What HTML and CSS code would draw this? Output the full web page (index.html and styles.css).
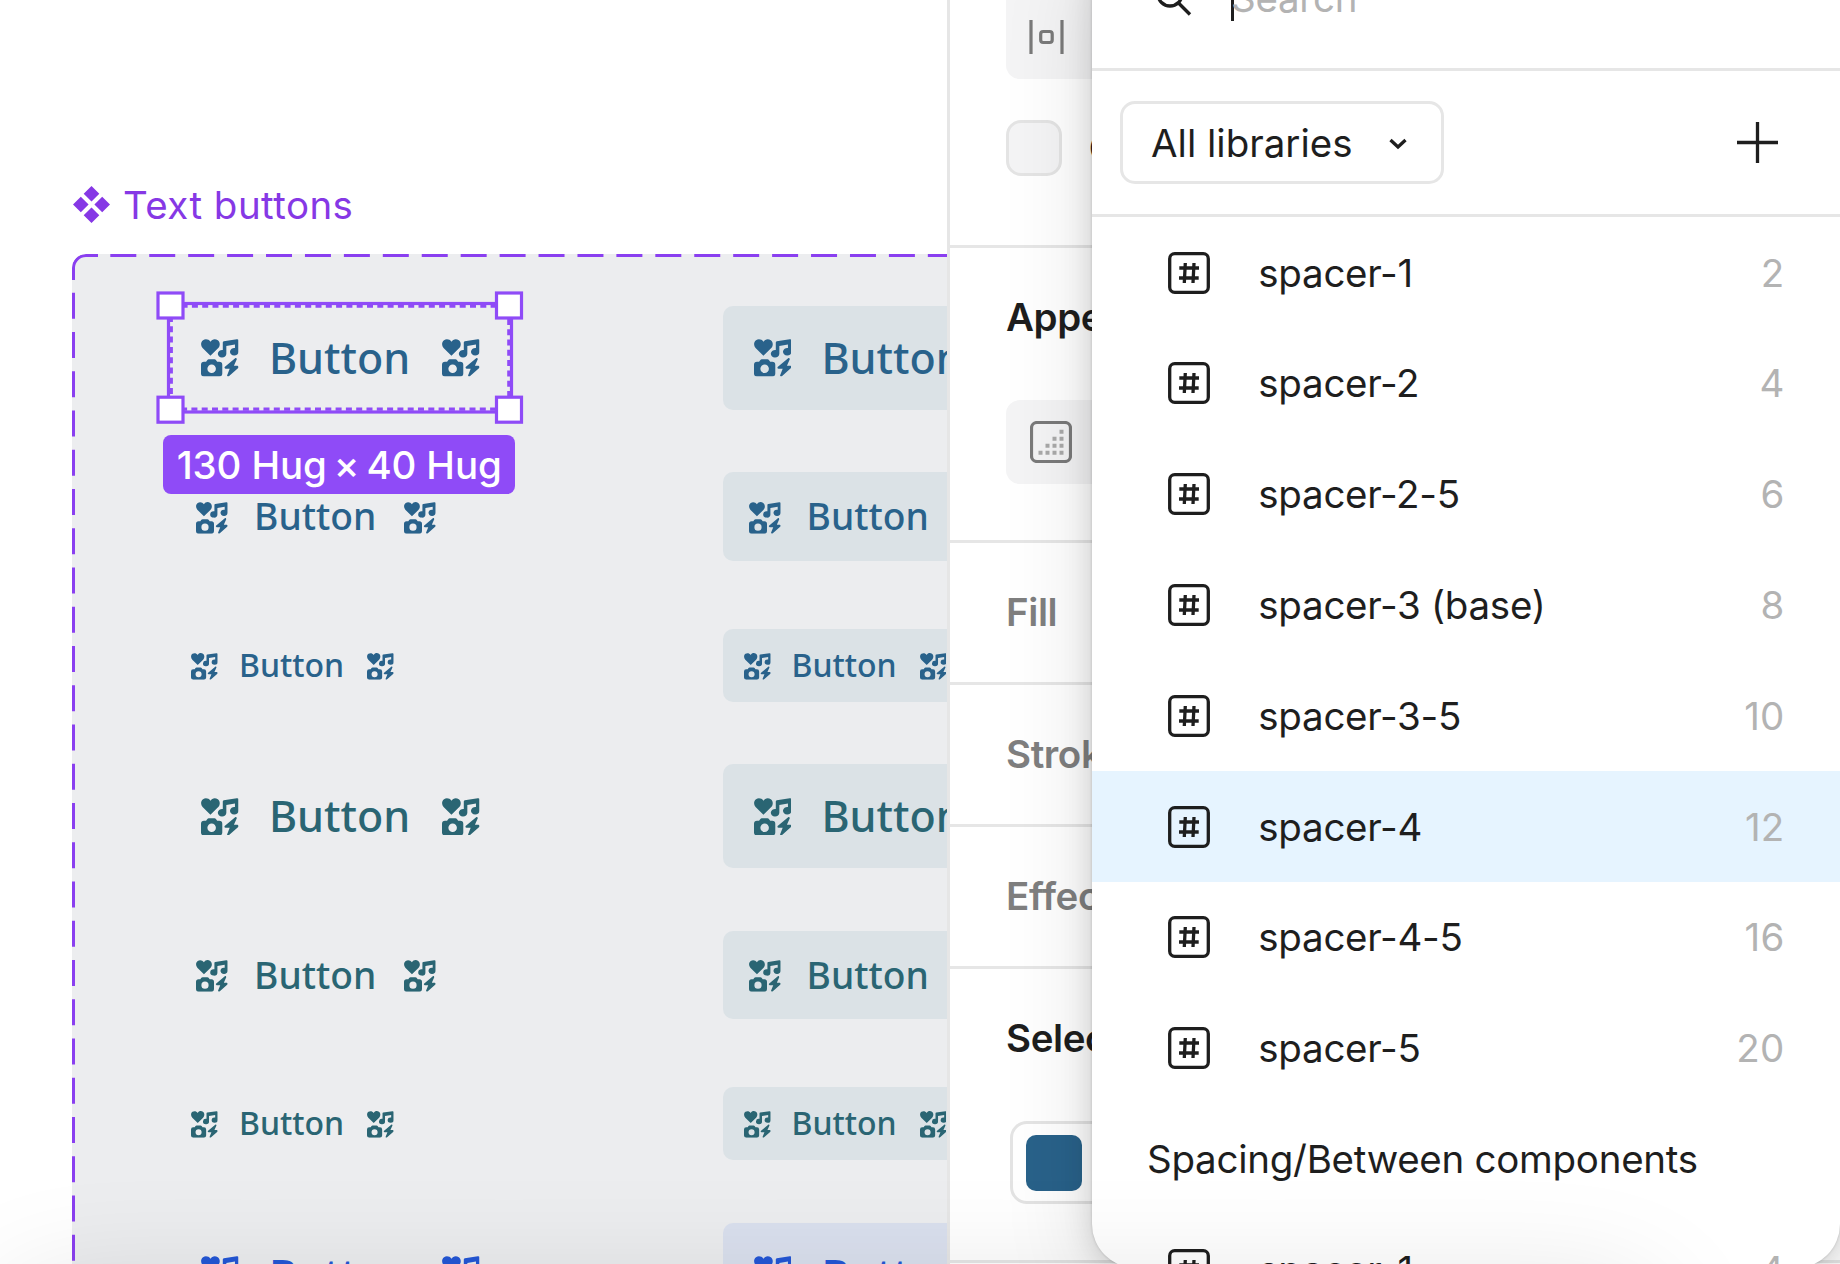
FILE: index.html
```
<!DOCTYPE html>
<html lang="en">
<head>
  <meta charset="UTF-8">
  <title>Text buttons</title>
  <link rel="stylesheet" href="styles.css">
</head>
<body>
  <svg class="sprite" width="0" height="0">
    <symbol id="icons" viewBox="0 0 37 37">
      <path d="M9.3 16.5 1.8 9.2C-.6 6.700-.4 2.800 2 1.200 4.500-.4 7.600.3 9.300 2.700 11-.3 14.300-.5 16.600 1.200 19 3 19.200 6.700 16.800 9.200Z"/>
      <path d="M21.500 3.400Q21.500 2.400 22.500 2.200L35.300.2Q37 0 37 1.500V12.500A4.200 3.700 0 1 1 33.500 9V5.500L25 6.900V14.500A4.200 3.700 0 1 1 21.500 10.900Z"/>
      <path fill-rule="evenodd" d="M3 22.500H5L6.300 20.700Q6.800 20 7.700 20H13.300Q14.200 20 14.700 20.700L16 22.500H18Q21 22.500 21 25.500V34Q21 37 18 37H3Q0 37 0 34V25.500Q0 22.500 3 22.500ZM10.500 25.200A4.200 4.200 0 1 0 10.500 33.600 4.200 4.200 0 1 0 10.500 25.200Z"/>
      <path d="M34 18.800 23.300 27.700Q22.800 29 24.200 29.400H28.300L25.700 36Q26 37.400 27.500 36.700L37 28.300Q37.400 26.900 36 26.500H32.500L35.300 20Q35.200 18.500 34 18.800Z"/>
    </symbol>
    <symbol id="number" viewBox="0 0 42 42">
      <rect x="1.700" y="1.700" width="38.600" height="38.600" rx="5"/>
      <path d="M11.300 16H31M11 26H30.700M17.300 11 16.300 31M26 11 25 31"/>
    </symbol>
  </svg>

  <div class="app">
    <main class="canvas">
      <h1 class="frame-title">
        <svg width="37" height="37" viewBox="0 0 37 37"><path d="M18.500 0 26.300 7.800 18.500 15.600 10.700 7.800ZM18.500 21.400 26.300 29.200 18.500 37 10.700 29.200ZM7.800 10.700 15.600 18.500 7.800 26.300 0 18.500ZM29.200 10.700 37 18.500 29.200 26.300 21.400 18.500Z"/></svg>
        <span>Text buttons</span>
      </h1>

      <section class="frame">
        <svg class="frame-border" width="875" height="1010" viewBox="0 0 875 1010">
          <path d="M26 1.500H14A12.500 12.500 0 0 0 1.500 14V26"/>
          <path d="M38.300 1.500H875" stroke-dasharray="26 12.930"/>
          <path d="M1.500 38.700V1010" stroke-dasharray="26 13.250"/>
        </svg>

        <div class="row">
          <div class="btn large blue selected">
            <svg class="ico"><use href="#icons"/></svg><span>Button</span><svg class="ico"><use href="#icons"/></svg>
            <svg class="selection" width="368" height="134" viewBox="0 0 368 134">
              <rect x="12.500" y="12.500" width="343" height="108.500"/>
              <rect x="15.300" y="15.200" width="337.500" height="103" stroke-dasharray="6 4.300"/>
              <g class="handles">
                <rect x="2" y="2" width="25" height="25"/>
                <rect x="340.500" y="2" width="25" height="25"/>
                <rect x="2" y="106.200" width="25" height="25"/>
                <rect x="340.500" y="106.200" width="25" height="25"/>
              </g>
            </svg>
            <div class="size-badge">130 Hug <span>×</span> 40 Hug</div>
          </div>
          <div class="btn large blue filled"><svg class="ico"><use href="#icons"/></svg><span>Button</span><svg class="ico"><use href="#icons"/></svg></div>
        </div>
        <div class="row">
          <div class="btn medium blue"><svg class="ico"><use href="#icons"/></svg><span>Button</span><svg class="ico"><use href="#icons"/></svg></div>
          <div class="btn medium blue filled"><svg class="ico"><use href="#icons"/></svg><span>Button</span><svg class="ico"><use href="#icons"/></svg></div>
        </div>
        <div class="row small-row">
          <div class="btn small blue"><svg class="ico"><use href="#icons"/></svg><span>Button</span><svg class="ico"><use href="#icons"/></svg></div>
          <div class="btn small blue filled"><svg class="ico"><use href="#icons"/></svg><span>Button</span><svg class="ico"><use href="#icons"/></svg></div>
        </div>
        <div class="row">
          <div class="btn large teal"><svg class="ico"><use href="#icons"/></svg><span>Button</span><svg class="ico"><use href="#icons"/></svg></div>
          <div class="btn large teal filled"><svg class="ico"><use href="#icons"/></svg><span>Button</span><svg class="ico"><use href="#icons"/></svg></div>
        </div>
        <div class="row">
          <div class="btn medium teal"><svg class="ico"><use href="#icons"/></svg><span>Button</span><svg class="ico"><use href="#icons"/></svg></div>
          <div class="btn medium teal filled"><svg class="ico"><use href="#icons"/></svg><span>Button</span><svg class="ico"><use href="#icons"/></svg></div>
        </div>
        <div class="row small-row">
          <div class="btn small teal"><svg class="ico"><use href="#icons"/></svg><span>Button</span><svg class="ico"><use href="#icons"/></svg></div>
          <div class="btn small teal filled"><svg class="ico"><use href="#icons"/></svg><span>Button</span><svg class="ico"><use href="#icons"/></svg></div>
        </div>
        <div class="row">
          <div class="btn large royal"><svg class="ico"><use href="#icons"/></svg><span>Button</span><svg class="ico"><use href="#icons"/></svg></div>
          <div class="btn large royal filled"><svg class="ico"><use href="#icons"/></svg><span>Button</span><svg class="ico"><use href="#icons"/></svg></div>
        </div>
      </section>
    </main>

    <aside class="inspector">
      <section class="layout">
        <div class="field gap-field">
          <svg width="36" height="34" viewBox="0 0 36 34"><path d="M2 0V34M33 0V34"/><rect x="11.700" y="11.500" width="11.500" height="11" rx="2.500"/></svg>
        </div>
        <div class="clip"><span class="checkbox"></span><span>Clip content</span></div>
      </section>
      <section class="appearance">
        <h2>Appearance</h2>
        <div class="field">
          <svg width="42" height="42" viewBox="0 0 42 42">
            <rect x="1.500" y="1.500" width="39" height="39" rx="5.500"/>
            <path class="dots" d="M29.500 10.700h4M22.500 17.700h4M29.500 17.700h4M15.500 24.700h4M22.500 24.700h4M29.500 24.700h4M8.500 31.700h4M15.500 31.700h4M22.500 31.700h4M29.500 31.700h4"/>
          </svg>
        </div>
      </section>
      <section class="collapsed"><h2>Fill</h2></section>
      <section class="collapsed"><h2>Stroke</h2></section>
      <section class="collapsed"><h2>Effects</h2></section>
      <section class="colors">
        <h2>Selection colors</h2>
        <div class="color-field"><span class="swatch"></span></div>
      </section>
    </aside>
  </div>

  <div class="picker">
    <div class="search">
      <svg width="44" height="44" viewBox="0 0 44 44"><circle cx="17" cy="16" r="12"/><path d="M25.500 25 37 36.500"/></svg>
      <span class="caret"></span>
      <span>Search</span>
    </div>
    <div class="toolbar">
      <div class="select">
        <span>All libraries</span>
        <svg width="18" height="12" viewBox="0 0 18 12"><path d="M1.500 2 9 9 16.500 2"/></svg>
      </div>
      <svg class="plus" width="41" height="41" viewBox="0 0 41 41"><path d="M20.500 0V41M0 20.500H41"/></svg>
    </div>
    <div class="list">
      <div class="item"><svg><use href="#number"/></svg><span>spacer-1</span><em>2</em></div>
      <div class="item"><svg><use href="#number"/></svg><span>spacer-2</span><em>4</em></div>
      <div class="item"><svg><use href="#number"/></svg><span>spacer-2-5</span><em>6</em></div>
      <div class="item"><svg><use href="#number"/></svg><span>spacer-3 (base)</span><em>8</em></div>
      <div class="item"><svg><use href="#number"/></svg><span>spacer-3-5</span><em>10</em></div>
      <div class="item active"><svg><use href="#number"/></svg><span>spacer-4</span><em>12</em></div>
      <div class="item"><svg><use href="#number"/></svg><span>spacer-4-5</span><em>16</em></div>
      <div class="item"><svg><use href="#number"/></svg><span>spacer-5</span><em>20</em></div>
      <div class="group">Spacing/Between components</div>
      <div class="item"><svg><use href="#number"/></svg><span>spacer-1</span><em>4</em></div>
    </div>
  </div>

  <div class="dock-shadow"></div>
</body>
</html>
```
FILE: styles.css
```
* {
  box-sizing: border-box;
}

html {
  overflow: hidden;
}

body {
  margin: 0;
  width: 1840px;
  height: 1264px;
  overflow: hidden;
  position: relative;
  background: #fff;
  color: #1e1e1e;
  font-family: Inter, "Liberation Sans", sans-serif;
  font-size: 38.5px;
  font-optical-sizing: none;
  letter-spacing: -0.27px;
  line-height: 56px;
}

svg {
  display: block;
  flex: none;
}

.sprite {
  position: absolute;
}

.app {
  display: flex;
  height: 1264px;
  overflow: hidden;
}

/* canvas */
.canvas {
  width: 947px;
  height: 1264px;
  flex: none;
  padding: 177px 0 0 72px;
  overflow: hidden;
}

.frame-title {
  display: flex;
  align-items: center;
  gap: 13px;
  margin: -1px 0 22px 1px;
  height: 56px;
  font-size: 38.5px;
  font-weight: 400;
  letter-spacing: 0.45px;
  color: #8638e5;
}

.frame-title svg {
  fill: #8638e5;
}

.frame-title span {
  margin-top: 2px;
}

.frame {
  position: relative;
  height: 1010px;
  overflow: hidden;
  padding: 52px 0 0 98.7px;
  border-radius: 14px 0 0 0;
  background: #ecedef;
}

.frame-border {
  position: absolute;
  left: 0;
  top: 0;
  fill: none;
  stroke: #8a3ff0;
  stroke-width: 3;
}

.row {
  display: grid;
  grid-template-columns: 552.5px 338px;
  justify-items: start;
  margin-bottom: 62.4px;
}

.row + .small-row {
  margin-top: 67.7px;
}

.row:has(+ .small-row) {
  margin-bottom: 0;
}

.btn {
  position: relative;
  display: flex;
  align-items: center;
  border-radius: 10px;
  font-family: "Noto Sans", sans-serif;
  font-weight: 480;
  letter-spacing: 0;
  white-space: nowrap;
}

.ico {
  fill: currentColor;
}

.large {
  height: 104px;
  padding: 0 30.7px;
  gap: 30px;
  font-size: 43px;
}

.large .ico {
  width: 37.5px;
  height: 37.5px;
}

.medium {
  height: 88.8px;
  padding: 0 25.7px;
  gap: 26px;
  font-size: 37.2px;
}

.medium .ico {
  width: 31.7px;
  height: 31.7px;
  margin-top: 2px;
}

.small {
  height: 73px;
  padding: 0 20.7px;
  gap: 21px;
  font-size: 32px;
}

.small .ico {
  width: 26.7px;
  height: 26.7px;
  margin-top: 2px;
}

.btn > span {
  margin-right: 2px;
}

.medium span,
.small span {
  margin-top: -1px;
}

.blue {
  color: #29628b;
}

.teal {
  color: #2a6573;
}

.royal {
  color: #2457d6;
}

.filled {
  background: #dbe2e6;
}

.royal.filled {
  background: #dae0ee;
}

.selected {
  z-index: 1;
}

.selection {
  position: absolute;
  left: -14.700px;
  top: -15.200px;
  fill: none;
  stroke: #8f4bf7;
  stroke-width: 3.2;
}

.handles {
  fill: #fff;
}

.size-badge {
  position: absolute;
  left: -7.5px;
  top: 129px;
  width: 352px;
  height: 59px;
  border-radius: 8px;
  background: #8f4bf7;
  color: #fff;
  font-family: Inter, sans-serif;
  font-size: 38.5px;
  font-weight: 500;
  letter-spacing: -0.15px;
  line-height: 60px;
  text-align: center;
}

.size-badge span {
  margin: 0 -3px;
}

/* inspector */
.inspector {
  flex: 1;
  border-left: 3px solid #e6e6e6;
}

.inspector section {
  padding-left: 56px;
  border-bottom: 3px solid #e6e6e6;
}

.inspector h2 {
  margin: 0;
  font-size: 38.5px;
  font-weight: 600;
  letter-spacing: -0.4px;
  white-space: nowrap;
}

.inspector svg {
  fill: none;
  stroke: #7a7a7a;
  stroke-width: 3.2;
}

.field {
  display: flex;
  align-items: center;
  height: 84px;
  padding-left: 23.7px;
  border-radius: 14px;
  background: #f4f4f5;
}

.layout {
  height: 248px;
}

.gap-field {
  height: 79px;
  padding: 0 0 5px 22.500px;
  border-radius: 0 0 0 14px;
}

.clip {
  display: flex;
  align-items: center;
  gap: 27px;
  margin-top: 41px;
  white-space: nowrap;
}

.checkbox {
  flex: none;
  width: 55.500px;
  height: 56px;
  border: 3px solid #e4e4e4;
  border-radius: 15px;
  background: #f4f4f5;
}

.appearance {
  height: 295px;
  padding-top: 41px;
}

.appearance .field {
  margin-top: 55px;
}

.appearance .dots {
  stroke: #a9a9a9;
  stroke-width: 4;
}

.collapsed {
  height: 142px;
  padding-top: 41px;
  color: #7f7f7f;
}

.colors {
  height: 294px;
  padding-top: 41px;
}

.color-field {
  margin: 55px 0 0 3.500px;
  height: 83px;
  padding: 11px 13.500px;
  border: 3px solid #e4e4e4;
  border-radius: 17px;
}

.swatch {
  display: block;
  width: 56px;
  height: 56px;
  border-radius: 10px;
  background: #29628a;
}

/* variable picker, floats over the inspector */
.picker {
  position: absolute;
  left: 1092px;
  top: -60px;
  width: 748px;
  height: 1328px;
  overflow: hidden;
  border-radius: 44px;
  background: #fff;
  box-shadow: 0 0 3px rgba(0, 0, 0, 0.18), 0 4px 30px rgba(0, 0, 0, 0.13), 0 18px 90px rgba(0, 0, 0, 0.13);
}

.picker svg {
  fill: none;
  stroke: #1e1e1e;
  stroke-width: 3.3;
}

.search {
  display: flex;
  align-items: center;
  height: 131px;
  padding: 0 0 12px 61px;
  border-bottom: 3px solid #e6e6e6;
  color: #b3b3b3;
}

.search svg {
  margin-top: 4px;
}

.caret {
  width: 3px;
  height: 46px;
  margin: 0 -3px 0 34px;
  background: #1e1e1e;
}

.toolbar {
  display: flex;
  align-items: center;
  justify-content: space-between;
  height: 146px;
  padding: 0 62px 0 28px;
  border-bottom: 3px solid #e6e6e6;
}

.select {
  display: flex;
  align-items: center;
  justify-content: space-between;
  width: 324px;
  height: 83px;
  padding: 0 34px 0 28px;
  border: 3px solid #e6e6e6;
  border-radius: 15px;
  letter-spacing: 0;
}

.select svg {
  margin-top: 3px;
}

.item {
  display: flex;
  align-items: center;
  height: 110.8px;
  padding: 0.3px 55.500px 0 76.300px;
}

.item svg {
  width: 42px;
  height: 42px;
}

.item span {
  flex: 1;
  margin-left: 48px;
}

.item em {
  font-style: normal;
  letter-spacing: 0.2px;
  color: #b3b3b3;
}

.item.active {
  background: #e6f4ff;
}

.group {
  height: 110.8px;
  padding-left: 55px;
  line-height: 113px;
}

/* soft shade cast by the dock below the window */
.dock-shadow {
  position: absolute;
  left: 0;
  top: 1290px;
  width: 1660px;
  height: 200px;
  border-radius: 60px;
  box-shadow: 0 0 120px rgba(0, 0, 0, 0.13);
}
```
